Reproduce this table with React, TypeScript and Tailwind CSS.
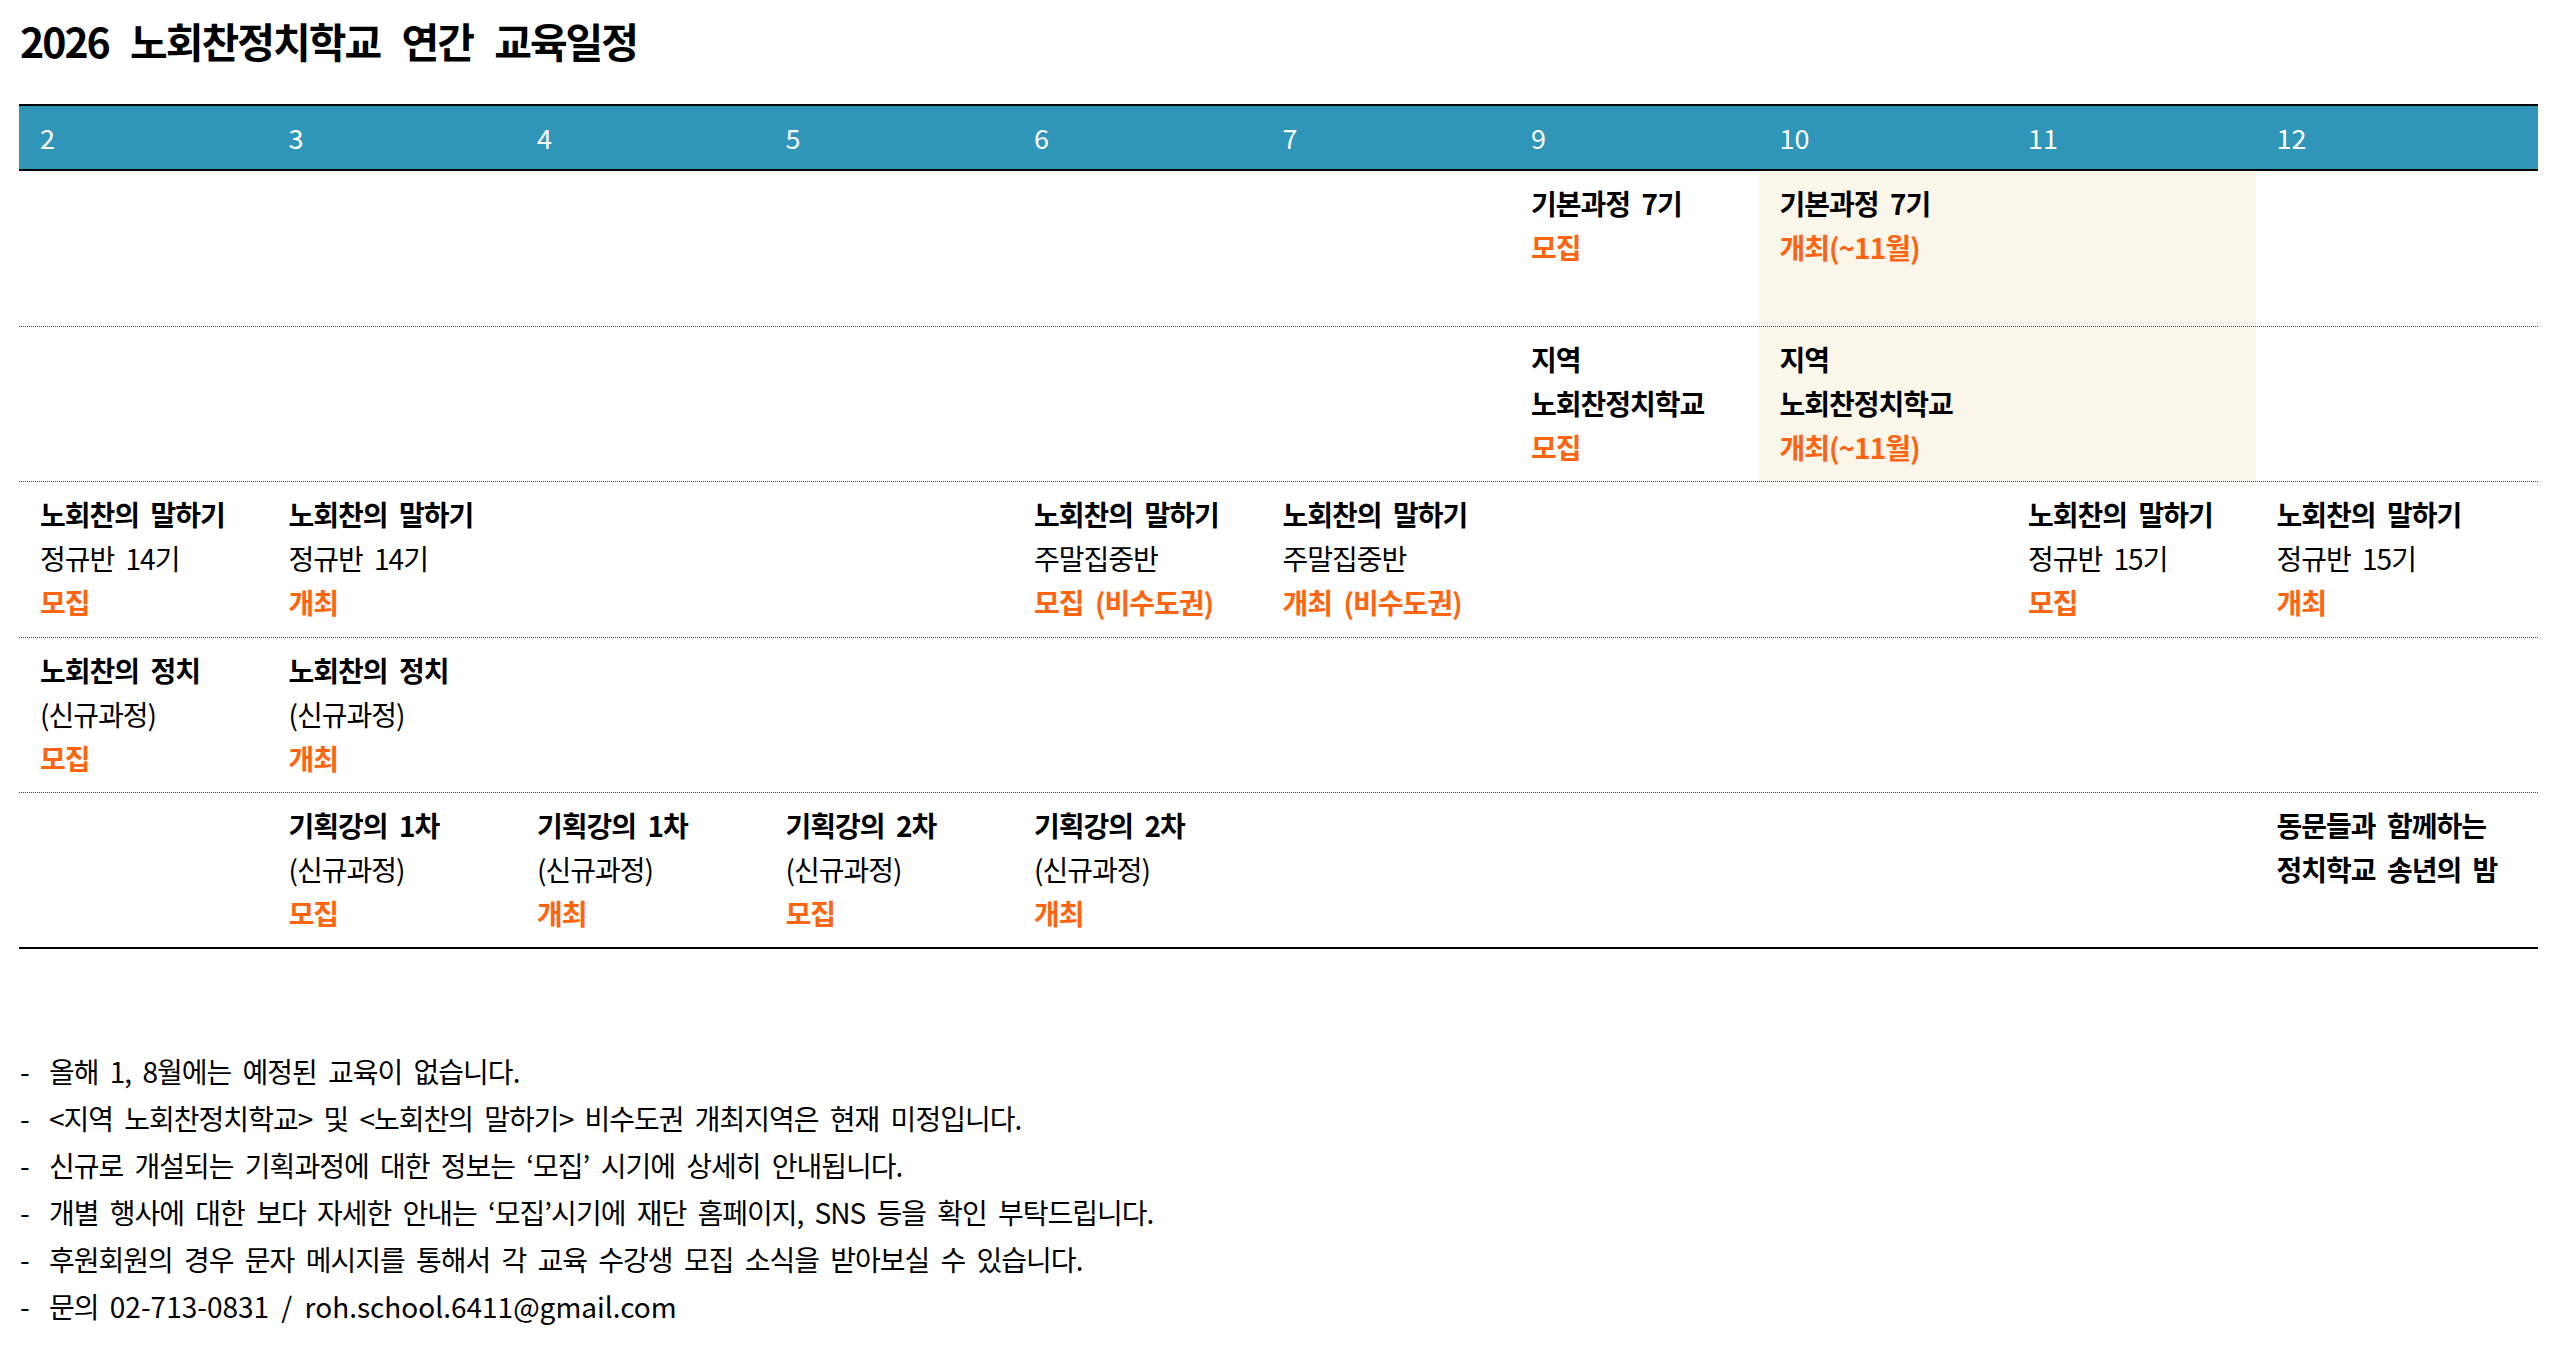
import React from "react";

type Line = { t: string; k: "b" | "r" | "o" };
type Cell = { span?: number; beige?: boolean; lines?: Line[] };

const b = (t: string): Line => ({ t, k: "b" });
const r = (t: string): Line => ({ t, k: "r" });
const o = (t: string): Line => ({ t, k: "o" });

const months = ["2", "3", "4", "5", "6", "7", "9", "10", "11", "12"];

const rows: Cell[][] = [
  [
    {}, {}, {}, {}, {}, {},
    { lines: [b("기본과정 7기"), o("모집")] },
    { span: 2, beige: true, lines: [b("기본과정 7기"), o("개최(~11월)")] },
    {},
  ],
  [
    {}, {}, {}, {}, {}, {},
    { lines: [b("지역"), b("노회찬정치학교"), o("모집")] },
    { span: 2, beige: true, lines: [b("지역"), b("노회찬정치학교"), o("개최(~11월)")] },
    {},
  ],
  [
    { lines: [b("노회찬의 말하기"), r("정규반 14기"), o("모집")] },
    { lines: [b("노회찬의 말하기"), r("정규반 14기"), o("개최")] },
    {}, {},
    { lines: [b("노회찬의 말하기"), r("주말집중반"), o("모집 (비수도권)")] },
    { lines: [b("노회찬의 말하기"), r("주말집중반"), o("개최 (비수도권)")] },
    {}, {},
    { lines: [b("노회찬의 말하기"), r("정규반 15기"), o("모집")] },
    { lines: [b("노회찬의 말하기"), r("정규반 15기"), o("개최")] },
  ],
  [
    { lines: [b("노회찬의 정치"), r("(신규과정)"), o("모집")] },
    { lines: [b("노회찬의 정치"), r("(신규과정)"), o("개최")] },
    {}, {}, {}, {}, {}, {}, {}, {},
  ],
  [
    {},
    { lines: [b("기획강의 1차"), r("(신규과정)"), o("모집")] },
    { lines: [b("기획강의 1차"), r("(신규과정)"), o("개최")] },
    { lines: [b("기획강의 2차"), r("(신규과정)"), o("모집")] },
    { lines: [b("기획강의 2차"), r("(신규과정)"), o("개최")] },
    {}, {}, {}, {},
    { lines: [b("동문들과 함께하는"), b("정치학교 송년의 밤")] },
  ],
];

const notes = [
  "올해 1, 8월에는 예정된 교육이 없습니다.",
  "<지역 노회찬정치학교> 및 <노회찬의 말하기> 비수도권 개최지역은 현재 미정입니다.",
  "신규로 개설되는 기획과정에 대한 정보는 ‘모집’ 시기에 상세히 안내됩니다.",
  "개별 행사에 대한 보다 자세한 안내는 ‘모집’시기에 재단 홈페이지, SNS 등을 확인 부탁드립니다.",
  "후원회원의 경우 문자 메시지를 통해서 각 교육 수강생 모집 소식을 받아보실 수 있습니다.",
];

function CellView({ cell }: { cell: Cell }) {
  return (
    <div
      className={
        (cell.span === 2 ? "col-span-2 " : "") +
        (cell.beige ? "bg-[#faf6ea] " : "") +
        "pl-[21px] pt-[10px]"
      }
    >
      {cell.lines?.map((l, i) => (
        <div
          key={i}
          className={
            "h-[44px] leading-[44px] whitespace-nowrap " +
            (l.k === "b"
              ? "font-bold text-black"
              : l.k === "o"
              ? "font-bold text-[#ff640f]"
              : "font-normal text-black")
          }
        >
          {l.t}
        </div>
      ))}
    </div>
  );
}

export default function App() {
  return (
    <div className="min-h-[1345px] w-[2561px] bg-white font-['Noto_Sans_CJK_KR','Noto_Sans',sans-serif] text-black">
      <h1 className="pl-[20px] pt-[16px] text-[41px] leading-[48px] font-bold tracking-[-2px] [word-spacing:14px]">
        2026 노회찬정치학교 연간 교육일정
      </h1>
      <div className="ml-[19px] mt-[40px] w-[2519px]">
        <div className="grid h-[67px] grid-cols-[repeat(9,248.5px)_1fr] items-center border-y-2 border-black bg-[#2f96b9]">
          {months.map((m) => (
            <div key={m} className="pl-[21px] text-[27px] leading-none text-white">
              {m}
            </div>
          ))}
        </div>
        <div className="text-[28px] tracking-[-1px] [word-spacing:6px]">
          {rows.map((row, ri) => (
            <div
              key={ri}
              className={
                "grid h-[155.5px] grid-cols-[repeat(9,248.5px)_1fr] " +
                (ri === rows.length - 1
                  ? "border-b-2 border-black"
                  : "border-b border-dotted border-[#444]")
              }
            >
              {row.map((c, ci) => (
                <CellView key={ci} cell={c} />
              ))}
            </div>
          ))}
        </div>
      </div>
      <div className="mt-[99px] pl-[20px] text-[28px] tracking-[-1px] [word-spacing:6px]">
        {notes.map((n, i) => (
          <div key={i} className="flex h-[47px] items-center leading-[47px] whitespace-nowrap">
            <span className="w-[29px]">-</span>
            <span>{n}</span>
          </div>
        ))}
        <div className="flex h-[47px] items-center leading-[47px] whitespace-nowrap">
          <span className="w-[29px]">-</span>
          <span>
            문의 <span className="tracking-[0px]">02-713-0831 / roh.school.6411@gmail.com</span>
          </span>
        </div>
      </div>
    </div>
  );
}
